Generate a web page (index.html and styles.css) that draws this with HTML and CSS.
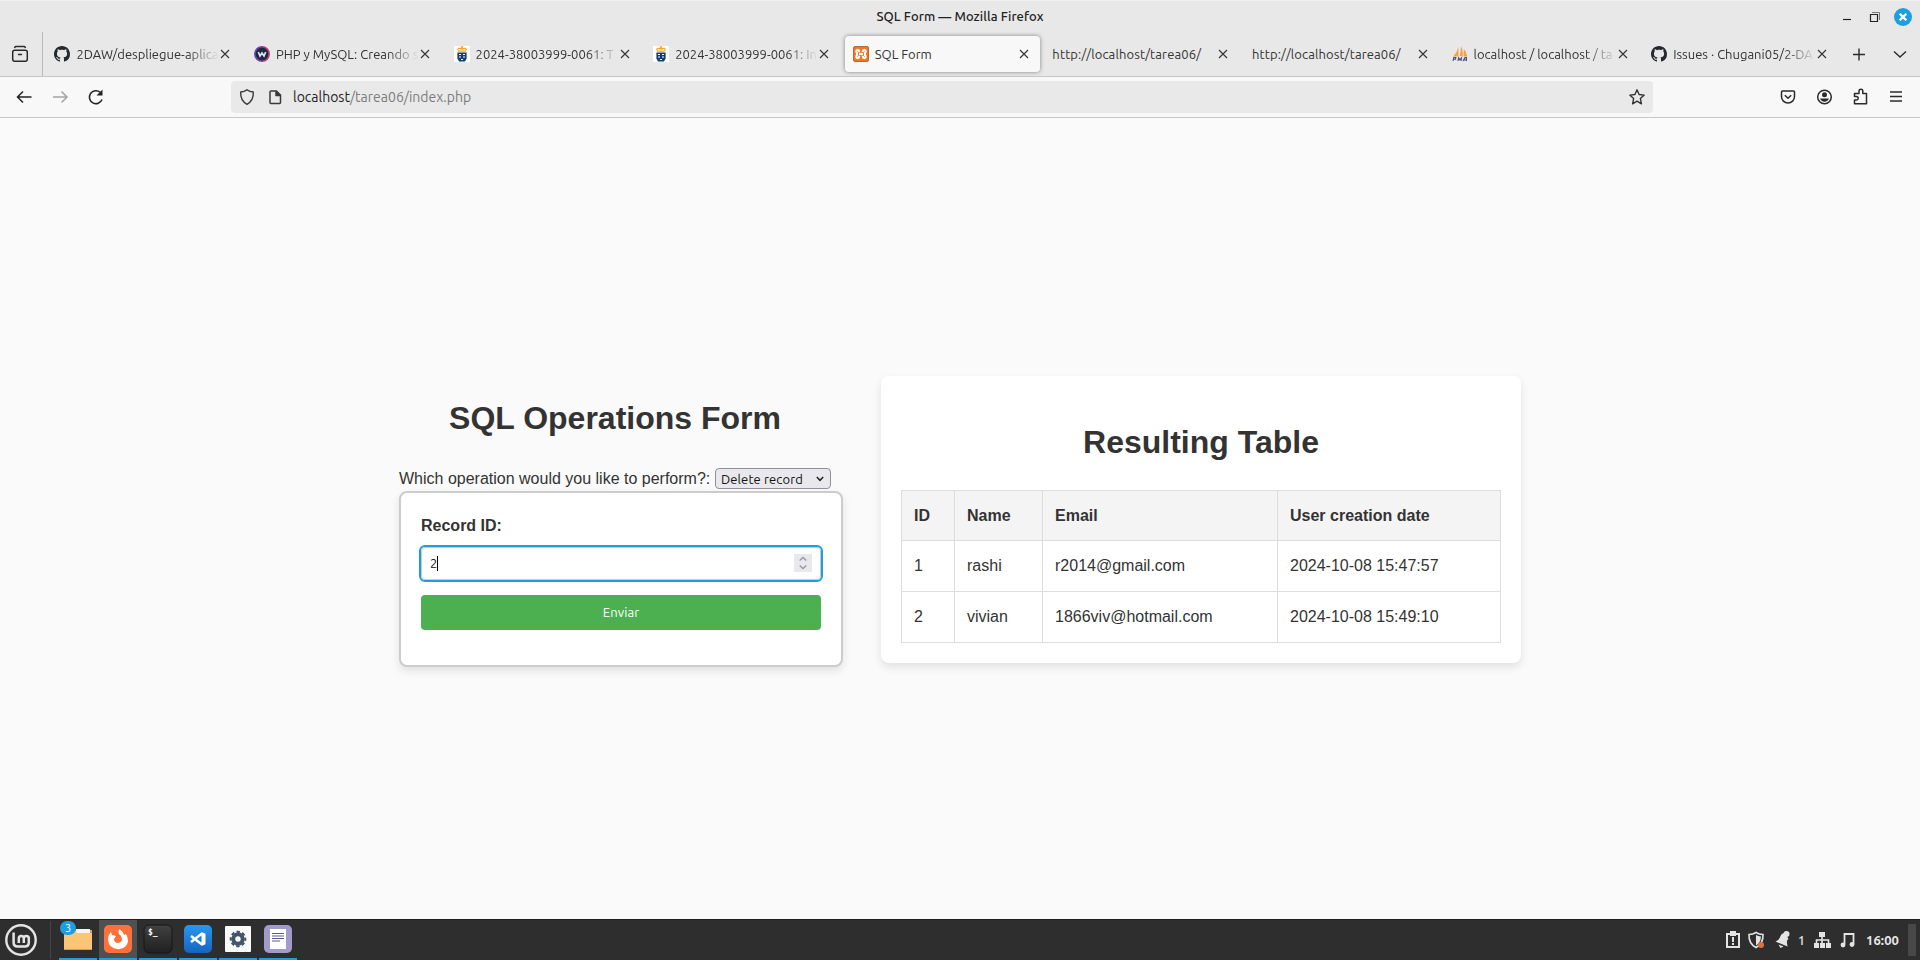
FILE: index.html
```html
<!DOCTYPE html>
<html lang="en">
<head>
<meta charset="utf-8">
<title>SQL Form</title>
<link rel="stylesheet" href="styles.css">
</head>
<body>
<svg class="defs" width="0" height="0">
  <symbol id="github" viewBox="0 0 16 16"><path fill="#24292f" d="M8 0C3.58 0 0 3.58 0 8c0 3.54 2.29 6.53 5.47 7.59.4.07.55-.17.55-.38 0-.19-.01-.82-.01-1.49-2.01.37-2.53-.49-2.69-.94-.09-.23-.48-.94-.82-1.13-.28-.15-.68-.52-.01-.53.63-.01 1.08.58 1.23.82.72 1.21 1.87.87 2.33.66.07-.52.28-.87.51-1.07-1.78-.2-3.64-.89-3.64-3.95 0-.87.31-1.59.82-2.15-.08-.2-.36-1.02.08-2.12 0 0 .67-.21 2.2.82.64-.18 1.32-.27 2-.27s1.36.09 2 .27c1.53-1.04 2.2-.82 2.2-.82.44 1.1.16 1.92.08 2.12.51.56.82 1.27.82 2.15 0 3.07-1.87 3.75-3.65 3.95.29.25.54.73.54 1.48 0 1.07-.01 1.93-.01 2.2 0 .21.15.46.55.38A8.01 8.01 0 0 0 16 8c0-4.42-3.58-8-8-8z"/></symbol>
  <symbol id="crest" viewBox="0 0 16 16"><path fill="#fff" d="M0 0h16v16H0z"/><path fill="none" stroke="#f5a623" stroke-width="1.1" d="M8 0v4M6.7 1h2.600M4.500 5L3.700 3.200 5 2.200l1.800.6L8 2l1.200.8 1.800-.6 1.300 1-.8 1.800zM4.500 5.300h7"/><path fill="#123f73" d="M3.400 6.400h9.200v6.200L11 15.600H5l-1.600-3z"/><path fill="#fff" d="M5 8h2v1H5zm4 0h2v1H9zM5 10.500h2v1H5zm4 0h2v1H9zM7 13h2v1H7z"/></symbol>
  <symbol id="close" viewBox="0 0 10 10"><path fill="none" stroke="#333" stroke-width="1.1" d="M1 1l8 8M9 1L1 9"/></symbol>
</svg>
<header class="titlebar">
  <span class="window-title">SQL Form — Mozilla Firefox</span>
  <svg class="window-buttons" width="76" height="20" viewBox="0 0 76 20"><path d="M7 12.5h8" stroke="#222" stroke-width="1.2"/><path d="M36 5.5h7.5V13" fill="none" stroke="#777"/><path d="M34.5 7.5h7v7h-7z" fill="none" stroke="#222" stroke-width="1.2"/><circle cx="67" cy="10" r="9" fill="#1f9ede"/><path d="M63.7 6.7l6.6 6.6M70.3 6.7l-6.6 6.6" stroke="#fff" stroke-width="2.3"/></svg>
</header>
<nav class="tabstrip">
  <div class="tab-manager"><svg width="18" height="18" viewBox="0 0 18 18" fill="none" stroke="#2b2b2b" stroke-width="1.5" stroke-linecap="round"><rect x="1.7" y="5.2" width="14.6" height="11" rx="2"/><path d="M3.7 2.4Q4 1.6 5 1.6h8Q14 1.6 14.3 2.4M7.5 9.5h3"/></svg></div>
  <div class="tab"><svg class="favicon"><use href="#github"/></svg><span class="tab-label fade">2DAW/despliegue-aplica</span><svg class="tab-close"><use href="#close"/></svg></div>
  <div class="tab"><svg class="favicon" viewBox="0 0 16 16"><defs><linearGradient id="ring" x1="0" x2="1"><stop stop-color="#6744b8"/><stop offset="1" stop-color="#ca3b72"/></linearGradient></defs><circle cx="8" cy="8" r="7.2" fill="#1c2940" stroke="url(#ring)" stroke-width="1.6"/><path d="M4.3 6l1.7 4 2-3 2 3 1.7-4" fill="none" stroke="#dbe4f2" stroke-width="1.7"/></svg><span class="tab-label fade">PHP y MySQL: Creando s</span><svg class="tab-close"><use href="#close"/></svg></div>
  <div class="tab"><svg class="favicon"><use href="#crest"/></svg><span class="tab-label fade">2024-38003999-0061: T</span><svg class="tab-close"><use href="#close"/></svg></div>
  <div class="tab"><svg class="favicon"><use href="#crest"/></svg><span class="tab-label fade">2024-38003999-0061: In</span><svg class="tab-close"><use href="#close"/></svg></div>
  <div class="tab active"><svg class="favicon" viewBox="0 0 16 16"><rect x=".5" y=".5" width="15" height="15" rx="1.5" fill="#f37623" stroke="#b96838"/><path d="M6.200 6.300V5.400a1.500 1.500 0 1 0-2.200 1.300v2.600a1.500 1.500 0 1 0 2.200 1.300V9.700M9.800 6.300V5.400a1.500 1.500 0 1 1 2.200 1.300v2.600a1.500 1.500 0 1 1-2.200 1.300V9.700M6 8h4" fill="none" stroke="#fff" stroke-width="2"/></svg><span class="tab-label">SQL Form</span><svg class="tab-close"><use href="#close"/></svg></div>
  <div class="tab"><span class="tab-label url-label">http://localhost/tarea06/</span><svg class="tab-close"><use href="#close"/></svg></div>
  <div class="tab"><span class="tab-label url-label">http://localhost/tarea06/</span><svg class="tab-close"><use href="#close"/></svg></div>
  <div class="tab"><svg class="favicon" viewBox="0 0 16 16"><path fill="#f9a13a" d="M6.4 1v9.5H1.2Q5 7 6.4 1zM9 .3q2 3.5 1.8 9.7H7.5Q9 6 9 .3zM11.8 3q3 3 3.5 7.5h-3.6z"/><path d="M1 15l.8-3.5h2l-.3 1.8H1.7M6 15l.6-3.2 1.2 2 1.7-2L9 15M11 15l2-3.4h1.4V15M12 14h2" fill="none" stroke="#4a4a78" stroke-width="1.1"/></svg><span class="tab-label fade">localhost / localhost / ta</span><svg class="tab-close"><use href="#close"/></svg></div>
  <div class="tab"><svg class="favicon"><use href="#github"/></svg><span class="tab-label fade">Issues · Chugani05/2-DA</span><svg class="tab-close"><use href="#close"/></svg></div>
  <svg class="tab-tools" width="60" height="16" viewBox="0 0 60 16" fill="none" stroke="#2b2b2b" stroke-width="1.4"><path d="M5 8.5h12M11 2.5v12M46 5.5l6 5.5 6-5.5"/></svg>
</nav>
<div class="toolbar">
  <svg class="history-buttons" width="100" height="20" viewBox="0 0 100 20" fill="none" stroke="#222" stroke-width="1.5"><path d="M15.5 10H1.5M7 4.5L1.5 10 7 15.5"/><path d="M37 10h14M45.500 4.500L51 10l-5.500 5.500" stroke="#a4a4a4"/><path d="M86 12.500a6.500 6.500 0 1 1-1.800-7.200"/><path d="M86.500 2.500v6h-6z" fill="#222" stroke="none"/></svg>
  <div class="urlbar">
    <svg width="16" height="18" viewBox="0 0 16 18" fill="none" stroke="#3a3a3a" stroke-width="1.4" stroke-linejoin="round"><path d="M8 1.800Q10.500 3.800 14.300 4 14.800 12.500 8 16.300 1.200 12.500 1.700 4 5.500 3.800 8 1.800z"/></svg>
    <svg class="page-icon" width="14" height="16" viewBox="0 0 14 16" fill="none" stroke="#3a3a3a" stroke-width="1.500" stroke-linejoin="round"><path d="M3 2h5.500L12.500 6v7.500q0 1-1 1H3q-1 0-1-1V3q0-1 1-1z"/><path d="M8 2v4.500h4.500" fill="#3a3a3a"/></svg>
    <span class="address"><b class="host">localhost</b>/tarea06/index.php</span>
    <svg class="star" width="18" height="18" viewBox="0 0 18 18" fill="none" stroke="#333" stroke-width="1.400" stroke-linejoin="round"><path d="M9 1.800l2.100 4.700 5.100.6-3.800 3.500 1 5.200L9 13.200l-4.400 2.600 1-5.200L1.800 7.100l5.100-.6z"/></svg>
  </div>
  <svg class="toolbar-actions" width="122" height="20" viewBox="0 0 122 20" fill="none" stroke="#2b2b2b" stroke-width="1.500" stroke-linejoin="round"><path d="M2.500 4h11q1 0 1 1v4.500a6.500 6.500 0 0 1-13 0V5q0-1 1-1zM4.800 8.300L8 11.300l3.200-3"/><circle cx="44.500" cy="10" r="6.800"/><circle cx="44.500" cy="7.700" r="2.500" fill="#2b2b2b" stroke="none"/><path d="M40 11.500h9a4.800 4.800 0 0 1-9 0z" fill="#2b2b2b" stroke="none"/><path d="M74.500 16.800V13h2a1.700 1.700 0 0 0 0-3.400h-2V6.500H79V4.200a1.900 1.900 0 0 1 3.800 0v2.300H86.500v10.300z"/><path d="M110 5h12M110 9.500h12M110 14h12" stroke-width="1.400"/></svg>
</div>
<main class="page">
  <section class="operations">
    <h1>SQL Operations Form</h1>
    <div class="chooser">Which operation would you like to perform?: <span class="select">Delete record<svg width="8" height="6" viewBox="0 0 8 6"><path d="M.8 1L4 4.300 7.200 1" fill="none" stroke="#222" stroke-width="1.500"/></svg></span></div>
    <form class="record-form">
      <label>Record ID:</label>
      <div class="number-input"><span>2</span><i class="caret"></i><svg class="spinner" width="18" height="18" viewBox="0 0 18 18"><path fill="#e9e9ed" d="M0 0h18v18H0z"/><path d="M5.700 6.500L9 3.500l3.300 3M5.700 11.500l3.300 3 3.300-3" fill="none" stroke="#9898a0" stroke-width="1.400"/></svg></div>
      <button type="button">Enviar</button>
    </form>
  </section>
  <section class="results">
    <h1>Resulting Table</h1>
    <table>
      <colgroup><col class="c-id"><col class="c-name"><col class="c-email"><col></colgroup>
      <tr><th>ID</th><th>Name</th><th>Email</th><th>User creation date</th></tr>
      <tr><td>1</td><td>rashi</td><td>r2014@gmail.com</td><td>2024-10-08 15:47:57</td></tr>
      <tr><td>2</td><td>vivian</td><td>1866viv@hotmail.com</td><td>2024-10-08 15:49:10</td></tr>
    </table>
  </section>
</main>
<footer class="taskbar">
  <div class="menu"><svg width="32" height="32" viewBox="0 0 32 32" fill="none" stroke="#e4e4e4"><circle cx="16" cy="16" r="14.700" stroke-width="2.400"/><path d="M8.600 8.500v10q0 4 4 4h7.200q4 0 4-4v-4a2.500 2.500 0 0 0-5 0V19v-4.500a2.500 2.500 0 0 0-5 0V19" stroke-width="2.500"/></svg></div>
  <div class="apps">
    <div class="app"><svg width="28" height="28" viewBox="0 0 28 28"><path fill="#c9a263" d="M0 5h28v20H0z"/><path fill="#f4f4f4" d="M12 4h14v4H12z"/><path fill="#fac676" d="M0 3h10l3 5h15v16H0z"/></svg><span class="badge">3</span></div>
    <div class="app focused"><svg width="30" height="30" viewBox="0 0 30 30"><rect x="1" y="1" width="28" height="28" rx="5" fill="#ff7139"/><path fill="#fff" d="M16 5q4 2 5 6l2-1q4 7 0 12-4 4-9 3-8-1-9-9 0-5 3-8l1 3 4 1-2 3q0 3 3 4 5 0 5-4 0-3-3-5-1-2 0-5z"/></svg></div>
    <div class="app"><svg width="30" height="30" viewBox="0 0 30 30"><defs><linearGradient id="term" x2="0" y2="1"><stop stop-color="#414141"/><stop offset="1" stop-color="#202020"/></linearGradient></defs><rect x="1" y="1" width="28" height="28" rx="5" fill="url(#term)" stroke="#161616"/><text class="prompt" x="5" y="11">$_</text></svg></div>
    <div class="app"><svg width="30" height="30" viewBox="0 0 30 30"><defs><linearGradient id="code" x2="0" y2="1"><stop stop-color="#2b96ee"/><stop offset="1" stop-color="#1565c0"/></linearGradient></defs><rect x="1" y="1" width="28" height="28" rx="5" fill="url(#code)"/><path d="M19 9.500L8 18M8 12l11 8.500" stroke="#fff" stroke-width="2.500"/><path fill="#fff" d="M18.500 8l4 1.700v10.600l-4 1.700z"/></svg></div>
    <div class="app"><svg width="26" height="26" viewBox="0 0 26 26"><rect width="26" height="26" rx="1" fill="#fafafa"/><circle cx="13" cy="13" r="4.700" fill="none" stroke="#44546a" stroke-width="4"/><circle cx="13" cy="13" r="7.300" fill="none" stroke="#44546a" stroke-width="2" stroke-dasharray="3.400 2.333" stroke-dashoffset="1.700"/></svg></div>
    <div class="app"><svg width="30" height="30" viewBox="0 0 30 30"><rect x="1" y="1" width="28" height="28" rx="5" fill="#a29acb"/><path fill="#fff" d="M7 5h16v20H7z"/><path d="M9 9.500h12M9 12h12M9 14.500h12M9 17h8" stroke="#5c5795"/></svg></div>
  </div>
  <div class="tray">
    <svg width="80" height="20" viewBox="0 0 80 20"><path fill="none" stroke="#e4e4e4" stroke-width="2" d="M2 4h12v13H2z"/><path fill="#e4e4e4" d="M5 1h6v5H5zM7 7h2v5H7zM7 13h2v2H7z"/><path fill="none" stroke="#e4e4e4" stroke-width="1.600" d="M31 2.500q3 2 7 2 .5 9-7 13-7.500-4-7-13 4 0 7-2z"/><path fill="#e4e4e4" d="M31 5q2 1 5 1.500-.5 6.500-5 9z"/><circle cx="36" cy="15" r="3" fill="#df7137"/><path fill="#e4e4e4" d="M50.500 11.500q4-1.500 5-5.500 1.200-3 4.500-3l3.500 6q-2 1-1.500 4l.5 3.500zM53.500 14.500l5 2-3 1.500z"/><circle cx="61.500" cy="4" r="3" fill="#e4e4e4"/></svg>
    <span class="notice-count">1</span>
    <svg class="tray-right" width="42" height="18" viewBox="0 0 42 18"><path fill="#e4e4e4" d="M5 1h6v5H5zM0 12h5v5H0zM6 12h5v5H6zM12 12h5v5h-5z"/><path d="M8 5v8M2.500 13V9h12v4" fill="none" stroke="#e4e4e4" stroke-width="1.600"/><path d="M30.500 13.500V3H39.500v10" fill="none" stroke="#e4e4e4" stroke-width="1.800"/><circle cx="29" cy="14" r="2.400" fill="#e4e4e4"/><circle cx="38" cy="13.500" r="2.400" fill="#e4e4e4"/></svg>
    <span class="clock">16:00</span>
    <span class="desktop-corner"></span>
  </div>
</footer>
</body>
</html>
```
FILE: styles.css
```css
* { box-sizing: border-box; }
body {
  margin: 0;
  width: 1920px;
  height: 960px;
  overflow: hidden;
  display: flex;
  flex-direction: column;
  background: #fafafa;
  color: #333;
  font: 13px "Ubuntu", "Noto Sans", sans-serif;
}
svg { display: block; flex: none; }
.defs { position: absolute; }

.titlebar {
  display: grid;
  grid-template-columns: 1fr auto 1fr;
  align-items: center;
  height: 32px;
  background: #e8e8e8;
  border-top: 1px solid #f0f0f0;
  padding-right: 8px;
  padding-left: 8px;
}
.window-title { grid-column: 2; padding-bottom: 2px; font-weight: 500; color: #222; letter-spacing: 0.08px; }
.window-buttons { justify-self: end; }

.tabstrip {
  display: flex;
  align-items: center;
  height: 45px;
  background: #e8e8e8;
  border-bottom: 1px solid #c6c6c6;
}
.tab-manager {
  display: flex;
  align-items: center;
  width: 43px;
  height: 44px;
  padding-left: 11px;
  border-right: 1px solid #b9b9b9;
  margin-right: 3.4px;
}
.tab {
  flex: none;
  display: flex;
  align-items: center;
  width: 195px;
  height: 36px;
  margin-right: 4.6px;
  padding: 0 11px 0 8px;
  border-radius: 4px;
}
.tab.active { background: #f8f8f8; box-shadow: 0 0 4px rgba(0, 0, 0, .45); }
.favicon { width: 16px; height: 16px; margin-right: 6px; }
.tab-label { flex: 1; min-width: 0; white-space: nowrap; line-height: 20px; }
.url-label { letter-spacing: 0.12px; }
.fade { mask-image: linear-gradient(to left, transparent, #000 32px); }
.tab-close { width: 10px; height: 10px; margin-left: 1px; }
.tab-tools { margin-left: 5px; }

.toolbar {
  display: flex;
  align-items: center;
  height: 41px;
  padding: 0 18px 0 16px;
  background: #f8f8f8;
  border-bottom: 1px solid #c8c8c8;
}
.urlbar {
  display: flex;
  align-items: center;
  width: 1422px;
  height: 32px;
  margin-left: 115px;
  padding: 0 7px 0 8px;
  border-radius: 4px;
  background: #e9e9e9;
}
.page-icon { margin: 0 11px 0 13px; }
.address { flex: 1; font-size: 14px; color: #7c7c7c; }
.host { font-weight: 400; color: #222; }
.toolbar-actions { margin-left: auto; }

.page {
  flex: 1;
  display: flex;
  align-items: center;
  justify-content: center;
  gap: 50px;
  padding-top: 1.5px;
  font: 16px/1.6 "Liberation Sans", Arial, sans-serif;
}
h1 { margin: 21.44px 0; font-size: 32px; line-height: 51.2px; text-align: center; }
.operations { width: 432px; }
.chooser { display: flex; align-items: center; justify-content: space-between; height: 25.6px; white-space: nowrap; }
.select {
  display: flex;
  align-items: center;
  justify-content: space-between;
  width: 116px;
  height: 21px;
  margin-top: 1px;
  padding: 0 6px 0 5px;
  border: 1px solid #8f8f9d;
  border-radius: 4px;
  background: #e9e9ed;
  color: #111;
  font: 13px "Ubuntu", "Noto Sans", sans-serif;
  letter-spacing: 0.12px;
}
.record-form {
  width: 444px;
  height: 175.600px;
  padding: 20px;
  border: 2px solid #ccc;
  border-radius: 8px;
  background: #fff;
  box-shadow: 0 4px 8px rgba(0, 0, 0, .1);
}
.record-form label { display: block; margin-bottom: 8px; font-weight: 700; }
.number-input {
  display: flex;
  align-items: center;
  height: 33px;
  padding: 0 8px;
  border: 1px solid #ccc;
  border-radius: 4px;
  outline: 2px solid #1f9ede;
  background: #fff;
  color: #111;
  font: 13px "Ubuntu", "Noto Sans", sans-serif;
}
.caret { width: 1px; height: 15px; background: #000; }
.spinner { margin-left: auto; }
.record-form button {
  display: block;
  width: 100%;
  height: 35px;
  margin-top: 15px;
  border: 0;
  border-radius: 4px;
  background: #4caf50;
  color: #fff;
  font: 13px "Ubuntu", "Noto Sans", sans-serif;
  letter-spacing: 0.1px;
}
.results {
  width: 640px;
  padding: 20px;
  border-radius: 8px;
  background: #fff;
  box-shadow: 0 4px 8px rgba(0, 0, 0, .1);
}
table { width: 600px; table-layout: fixed; border-collapse: collapse; }
.c-id { width: 53px; }
.c-name { width: 88px; }
.c-email { width: 235px; }
th, td { padding: 12px; border: 1px solid #ddd; text-align: left; }
th { background: #f4f4f4; }

.taskbar {
  display: flex;
  align-items: center;
  height: 41px;
  background: #2e2e2e;
  border-top: 1px solid #1e1e1e;
  color: #e8e8e8;
}
.menu { width: 51px; height: 38px; padding: 3px 0 0 5px; border-right: 1px solid #454545; }
.apps { display: flex; gap: 2px; height: 40px; margin-left: 8px; }
.app {
  position: relative;
  display: flex;
  align-items: center;
  justify-content: center;
  width: 38px;
  height: 40px;
  border-bottom: 2px solid #1f9ede;
}
.focused { background: #505050; }
.badge {
  position: absolute;
  left: 1px;
  top: 1px;
  width: 16px;
  height: 14px;
  border-radius: 7px;
  background: #1f9ede;
  color: #fff;
  font-size: 11px;
  line-height: 14px;
  text-align: center;
}
.prompt { font: bold 8px "DejaVu Sans Mono", monospace; fill: #fff; }
.tray { display: flex; align-items: center; margin-left: auto; font-weight: 500; }
.notice-count { margin-left: -7px; }
.tray-right { margin-left: 9px; }
.clock { margin-left: 10px; font-weight: 600; letter-spacing: 0.1px; }
.desktop-corner { width: 8px; height: 32px; margin: 0 4px 0 9px; background: #484848; }
```
